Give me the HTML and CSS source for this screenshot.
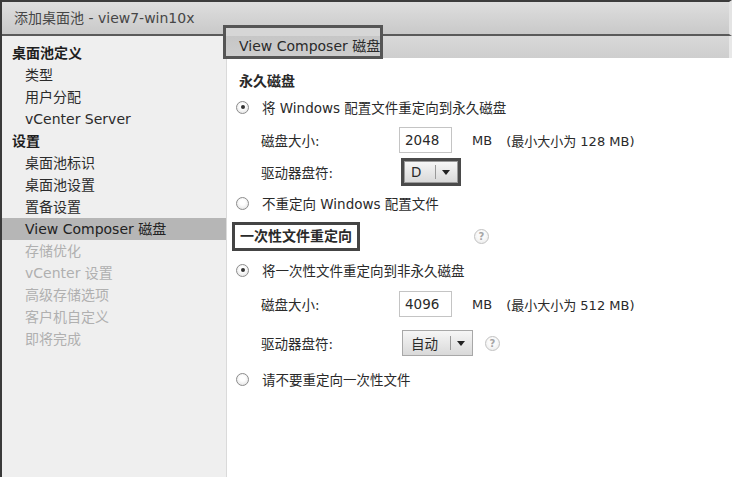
FILE: index.html
```html
<!DOCTYPE html>
<html lang="zh-CN">
<head>
<meta charset="utf-8">
<title>添加桌面池</title>
<link rel="stylesheet" href="styles.css">
</head>
<body>
<div class="window">
  <div class="titlebar">添加桌面池 - view7-win10x</div>
  <div class="main">
    <nav class="sidebar">
      <div class="nav-group">桌面池定义</div>
      <div class="nav-item">类型</div>
      <div class="nav-item">用户分配</div>
      <div class="nav-item">vCenter Server</div>
      <div class="nav-group">设置</div>
      <div class="nav-item">桌面池标识</div>
      <div class="nav-item">桌面池设置</div>
      <div class="nav-item">置备设置</div>
      <div class="nav-item selected">View Composer 磁盘</div>
      <div class="nav-item disabled">存储优化</div>
      <div class="nav-item disabled">vCenter 设置</div>
      <div class="nav-item disabled">高级存储选项</div>
      <div class="nav-item disabled">客户机自定义</div>
      <div class="nav-item disabled">即将完成</div>
    </nav>
    <section class="content">
      <div class="header-bar">
        <div class="tab">View Composer 磁盘</div>
      </div>
      <div class="form">
        <div class="heading h-perm">永久磁盘</div>
        <div class="radio-row r1"><span class="radio checked"></span><span>将 Windows 配置文件重定向到永久磁盘</span></div>
        <div class="field-row f1">
          <span class="label">磁盘大小:</span>
          <span class="input">2048</span>
          <span class="unit">MB</span>
          <span class="note">(最小大小为 128 MB)</span>
        </div>
        <div class="field-row f2">
          <span class="label">驱动器盘符:</span>
          <span class="mark-box"><span class="select select-d"><span class="sel-text">D</span><span class="sel-sep"></span><span class="sel-arrow"></span></span></span>
        </div>
        <div class="radio-row r2"><span class="radio"></span><span>不重定向 Windows 配置文件</span></div>
        <div class="section-row">
          <div class="section-box">一次性文件重定向</div>
          <span class="help help-head">?</span>
        </div>
        <div class="radio-row r3"><span class="radio checked"></span><span>将一次性文件重定向到非永久磁盘</span></div>
        <div class="field-row f3">
          <span class="label">磁盘大小:</span>
          <span class="input">4096</span>
          <span class="unit">MB</span>
          <span class="note">(最小大小为 512 MB)</span>
        </div>
        <div class="field-row f4">
          <span class="label">驱动器盘符:</span>
          <span class="select select-auto"><span class="sel-text">自动</span><span class="sel-sep"></span><span class="sel-arrow"></span></span>
          <span class="help help-field">?</span>
        </div>
        <div class="radio-row r4"><span class="radio"></span><span>请不要重定向一次性文件</span></div>
      </div>
    </section>
  </div>
</div>
</body>
</html>
```

FILE: styles.css
```css
* { box-sizing: border-box; }
html, body { margin: 0; padding: 0; background: #fff; }
body {
  font-family: "DejaVu Sans", "Noto Sans CJK SC", sans-serif;
  color: #2a2a2a;
}
.window {
  width: 732px;
  height: 477px;
  display: flex;
  flex-direction: column;
  border-left: 2px solid #3a3a3a;
  overflow: hidden;
}
.titlebar {
  height: 36px;
  flex: none;
  border-top: 2px solid #3c3c3c;
  border-bottom: 2px solid #5a5a5a;
  border-right: 3px solid #e4e4e4;
  background: linear-gradient(#dedede, #c9c9c9);
  font-size: 14px;
  line-height: 32px;
  padding-left: 12px;
  color: #464646;
}
.main {
  flex: 1;
  display: flex;
}
.sidebar {
  width: 225px;
  flex: none;
  background: #efefef;
  border-right: 1px solid #dadada;
  padding-top: 6px;
  font-size: 14px;
}
.nav-group, .nav-item {
  height: 22px;
  line-height: 22px;
  white-space: nowrap;
}
.nav-group {
  font-weight: bold;
  padding-left: 10px;
  color: #1e1e1e;
}
.nav-item {
  padding-left: 23px;
  color: #2b2b2b;
}
.nav-item.selected {
  background: #b6b6b6;
  color: #222;
}
.nav-item.disabled { color: #b0b0b0; }

.content {
  flex: 1;
  display: flex;
  flex-direction: column;
}
.header-bar {
  height: 22px;
  flex: none;
  background: linear-gradient(#d9d9d9, #cecece);
  border-right: 3px solid #e8e8e8;
  position: relative;
}
.tab {
  position: relative;
  margin-left: -4px;
  margin-top: -11px;
  width: 160px;
  height: 34px;
  border: 3px solid #555;
  background: linear-gradient(#d6d6d6 0, #d6d6d6 8px, #c6c6c6 8px, #cdcdcd);
  font-size: 14px;
  padding-top: 10px;
  padding-left: 13px;
  line-height: 16px;
  color: #2a2a2a;
  white-space: nowrap;
}
.form {
  padding-left: 12px;
  font-size: 13.5px;
}
.heading {
  font-size: 14px;
  font-weight: bold;
  height: 22px;
  line-height: 22px;
}
.h-perm { margin-top: 12px; }
.radio-row {
  height: 22px;
  display: flex;
  align-items: center;
  gap: 13px;
  margin-left: -3px;
  white-space: nowrap;
}
.r1 { margin-top: 4px; }
.r2 { margin-top: 6px; }
.r3 { margin-top: 8px; }
.r4 { margin-top: 12px; }
.radio {
  width: 13px;
  height: 13px;
  border-radius: 50%;
  border: 1px solid #8c8c8c;
  background: radial-gradient(circle at 50% 40%, #ffffff 30%, #dcdcdc 100%);
  display: flex;
  align-items: center;
  justify-content: center;
  flex: none;
}
.radio.checked::after {
  content: "";
  width: 4px;
  height: 4px;
  border-radius: 50%;
  background: #333;
}
.field-row {
  display: flex;
  align-items: center;
  padding-left: 22px;
  white-space: nowrap;
}
.f1 { height: 28px; margin-top: 8px; }
.f2 { height: 28px; margin-top: 4px; }
.f3 { height: 28px; margin-top: 9px; }
.f4 { height: 26px; margin-top: 12px; }
.label { width: 138px; flex: none; }
.input {
  width: 53px;
  height: 26px;
  border: 1px solid #c4c4c4;
  background: #fff;
  padding-left: 5px;
  line-height: 24px;
  flex: none;
}
.unit { margin-left: 20px; font-size: 13px; }
.note { margin-left: 14px; font-size: 13px; }
.mark-box {
  border: 3px solid #4a4a4a;
  display: flex;
  height: 28px;
  margin-left: 2px;
}
.select {
  display: flex;
  align-items: center;
  border: 1px solid #a8a8a8;
  background: linear-gradient(#f6f6f6, #d9d9d9);
  height: 26px;
  flex: none;
}
.mark-box .select {
  height: 22px;
  border-color: #9a9a9a;
}
.select-d { width: 54px; }
.select-auto { width: 71px; margin-left: 3px; }
.sel-text { padding-left: 6px; width: 30px; }
.select-auto .sel-text { padding-left: 8px; width: 47px; }
.sel-sep {
  width: 1px;
  height: 14px;
  background: #999;
}
.sel-arrow {
  width: 0;
  height: 0;
  border-left: 4px solid transparent;
  border-right: 4px solid transparent;
  border-top: 5px solid #222;
  margin-left: 6px;
}
.section-row {
  display: flex;
  align-items: center;
  margin-top: 8px;
  height: 29px;
}
.section-box {
  margin-left: -7px;
  width: 128px;
  height: 29px;
  border: 3px solid #444;
  font-weight: bold;
  font-size: 14px;
  line-height: 23px;
  padding-left: 5px;
  white-space: nowrap;
}
.help {
  width: 15px;
  height: 15px;
  border-radius: 50%;
  border: 1px solid #c2c2c2;
  background: radial-gradient(circle at 50% 40%, #fafafa 40%, #e6e6e6);
  color: #a6a6a6;
  font-size: 10px;
  font-weight: bold;
  line-height: 13px;
  text-align: center;
  flex: none;
}
.help-head { margin-left: 114px; }
.help-field { margin-left: 12px; }
```
